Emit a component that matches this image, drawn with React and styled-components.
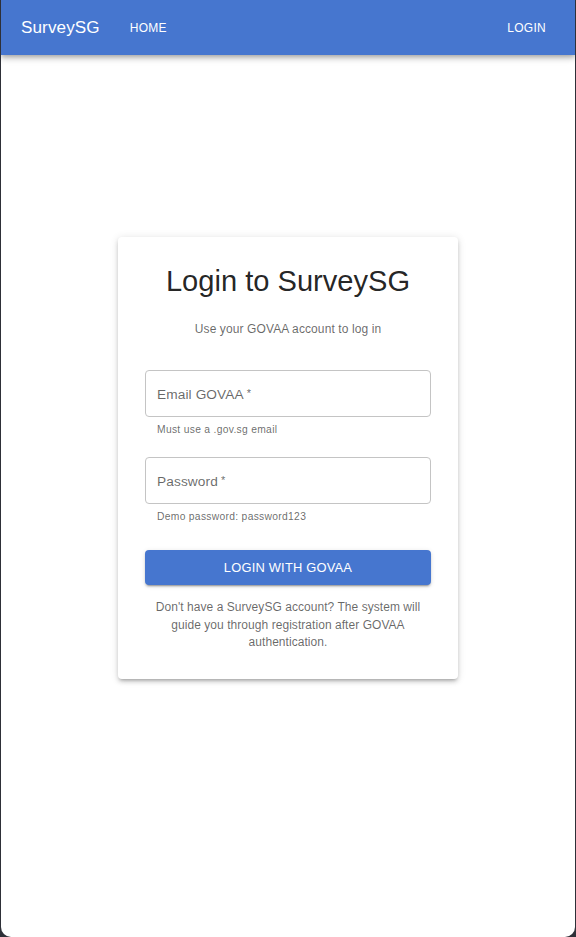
import styled, { createGlobalStyle } from 'styled-components';

const GlobalStyle = createGlobalStyle`
  html, body {
    margin: 0;
    padding: 0;
    background: #2e3038;
  }
  body {
    font-family: "Liberation Sans", Arial, Helvetica, sans-serif;
    -webkit-font-smoothing: antialiased;
  }
`;

export default function App() {
    return (
        <>
            <GlobalStyle />
            <Frame>
                <AppBar>
                    <Brand>SurveySG</Brand>
                    <NavLink>HOME</NavLink>
                    <Spacer />
                    <NavLink>LOGIN</NavLink>
                </AppBar>
                <Main>
                    <Card>
                        <Title>Login to SurveySG</Title>
                        <Subtitle>Use your GOVAA account to log in</Subtitle>
                        <Field>
                            <Label>Email GOVAA<Star>*</Star></Label>
                        </Field>
                        <Helper>Must use a .gov.sg email</Helper>
                        <Field $spaced>
                            <Label>Password<Star>*</Star></Label>
                        </Field>
                        <Helper>Demo password: password123</Helper>
                        <SubmitButton>LOGIN WITH GOVAA</SubmitButton>
                        <Footnote>
                            Don't have a SurveySG account? The system will guide you through registration after GOVAA authentication.
                        </Footnote>
                    </Card>
                </Main>
            </Frame>
        </>
    )
}

const Frame = styled.div`
    margin: 0 1px;
    min-height: 937px;
    background: #ffffff;
    border-radius: 0 0 10px 10px;
    overflow: hidden;
    display: flex;
    flex-direction: column;
`

const AppBar = styled.header`
    height: 55px;
    background: #4676cf;
    display: flex;
    align-items: center;
    padding: 0 29px 0 20px;
    box-shadow: 0 2px 4px -1px rgba(0,0,0,0.2), 0 4px 5px 0 rgba(0,0,0,0.14), 0 1px 10px 0 rgba(0,0,0,0.12);
    position: relative;
    z-index: 1;
`

const Brand = styled.div`
    color: #ffffff;
    font-size: 17.1px;
    font-weight: 500;
    letter-spacing: 0.1px;
    margin-right: 30px;
`

const NavLink = styled.div`
    color: #ffffff;
    font-size: 12px;
    font-weight: 500;
    letter-spacing: 0.3px;
`

const Spacer = styled.div`
    flex: 1;
`

const Main = styled.main`
    flex: 1;
    display: flex;
    justify-content: center;
    padding-top: 182px;
`

const Card = styled.section`
    width: 340px;
    align-self: flex-start;
    box-sizing: border-box;
    padding: 26px 27px 27px;
    background: #ffffff;
    border-radius: 4px;
    box-shadow: 0 3px 3px -2px rgba(0,0,0,0.2), 0 3px 4px 0 rgba(0,0,0,0.14), 0 1px 8px 0 rgba(0,0,0,0.12);
    display: flex;
    flex-direction: column;
`

const Title = styled.h1`
    margin: 0;
    font-size: 29.1px;
    font-weight: 400;
    line-height: 36px;
    text-align: center;
    color: rgba(0,0,0,0.87);
`

const Subtitle = styled.p`
    margin: 20px 0 0;
    font-size: 12px;
    line-height: 20px;
    text-align: center;
    color: rgba(0,0,0,0.6);
    letter-spacing: 0.1px;
`

const Field = styled.div`
    margin-top: ${p => p.$spaced ? '20px' : '31px'};
    height: 47px;
    box-sizing: border-box;
    border: 1px solid #c4c4c4;
    border-radius: 4px;
    display: flex;
    align-items: center;
    padding: 1px 11px 0;
`

const Label = styled.span`
    font-size: 13.7px;
    color: rgba(0,0,0,0.6);
    letter-spacing: 0.1px;
`

const Star = styled.span`
    font-size: 11px;
    margin-left: 3px;
    position: relative;
    top: -2px;
`

const Helper = styled.div`
    margin: 6px 12px 0;
    font-size: 10.3px;
    line-height: 14px;
    letter-spacing: 0.3px;
    color: rgba(0,0,0,0.6);
`

const SubmitButton = styled.button`
    margin-top: 26px;
    height: 35px;
    border: none;
    border-radius: 4px;
    background: #4676cf;
    color: #ffffff;
    font-family: inherit;
    font-size: 12.9px;
    font-weight: 500;
    letter-spacing: 0.2px;
    box-shadow: 0 3px 1px -2px rgba(0,0,0,0.2), 0 2px 2px 0 rgba(0,0,0,0.14), 0 1px 5px 0 rgba(0,0,0,0.12);
    cursor: pointer;
`

const Footnote = styled.p`
    margin: 14px 0 0;
    font-size: 12px;
    line-height: 17.6px;
    text-align: center;
    color: rgba(0,0,0,0.6);
    letter-spacing: 0.05px;
`
